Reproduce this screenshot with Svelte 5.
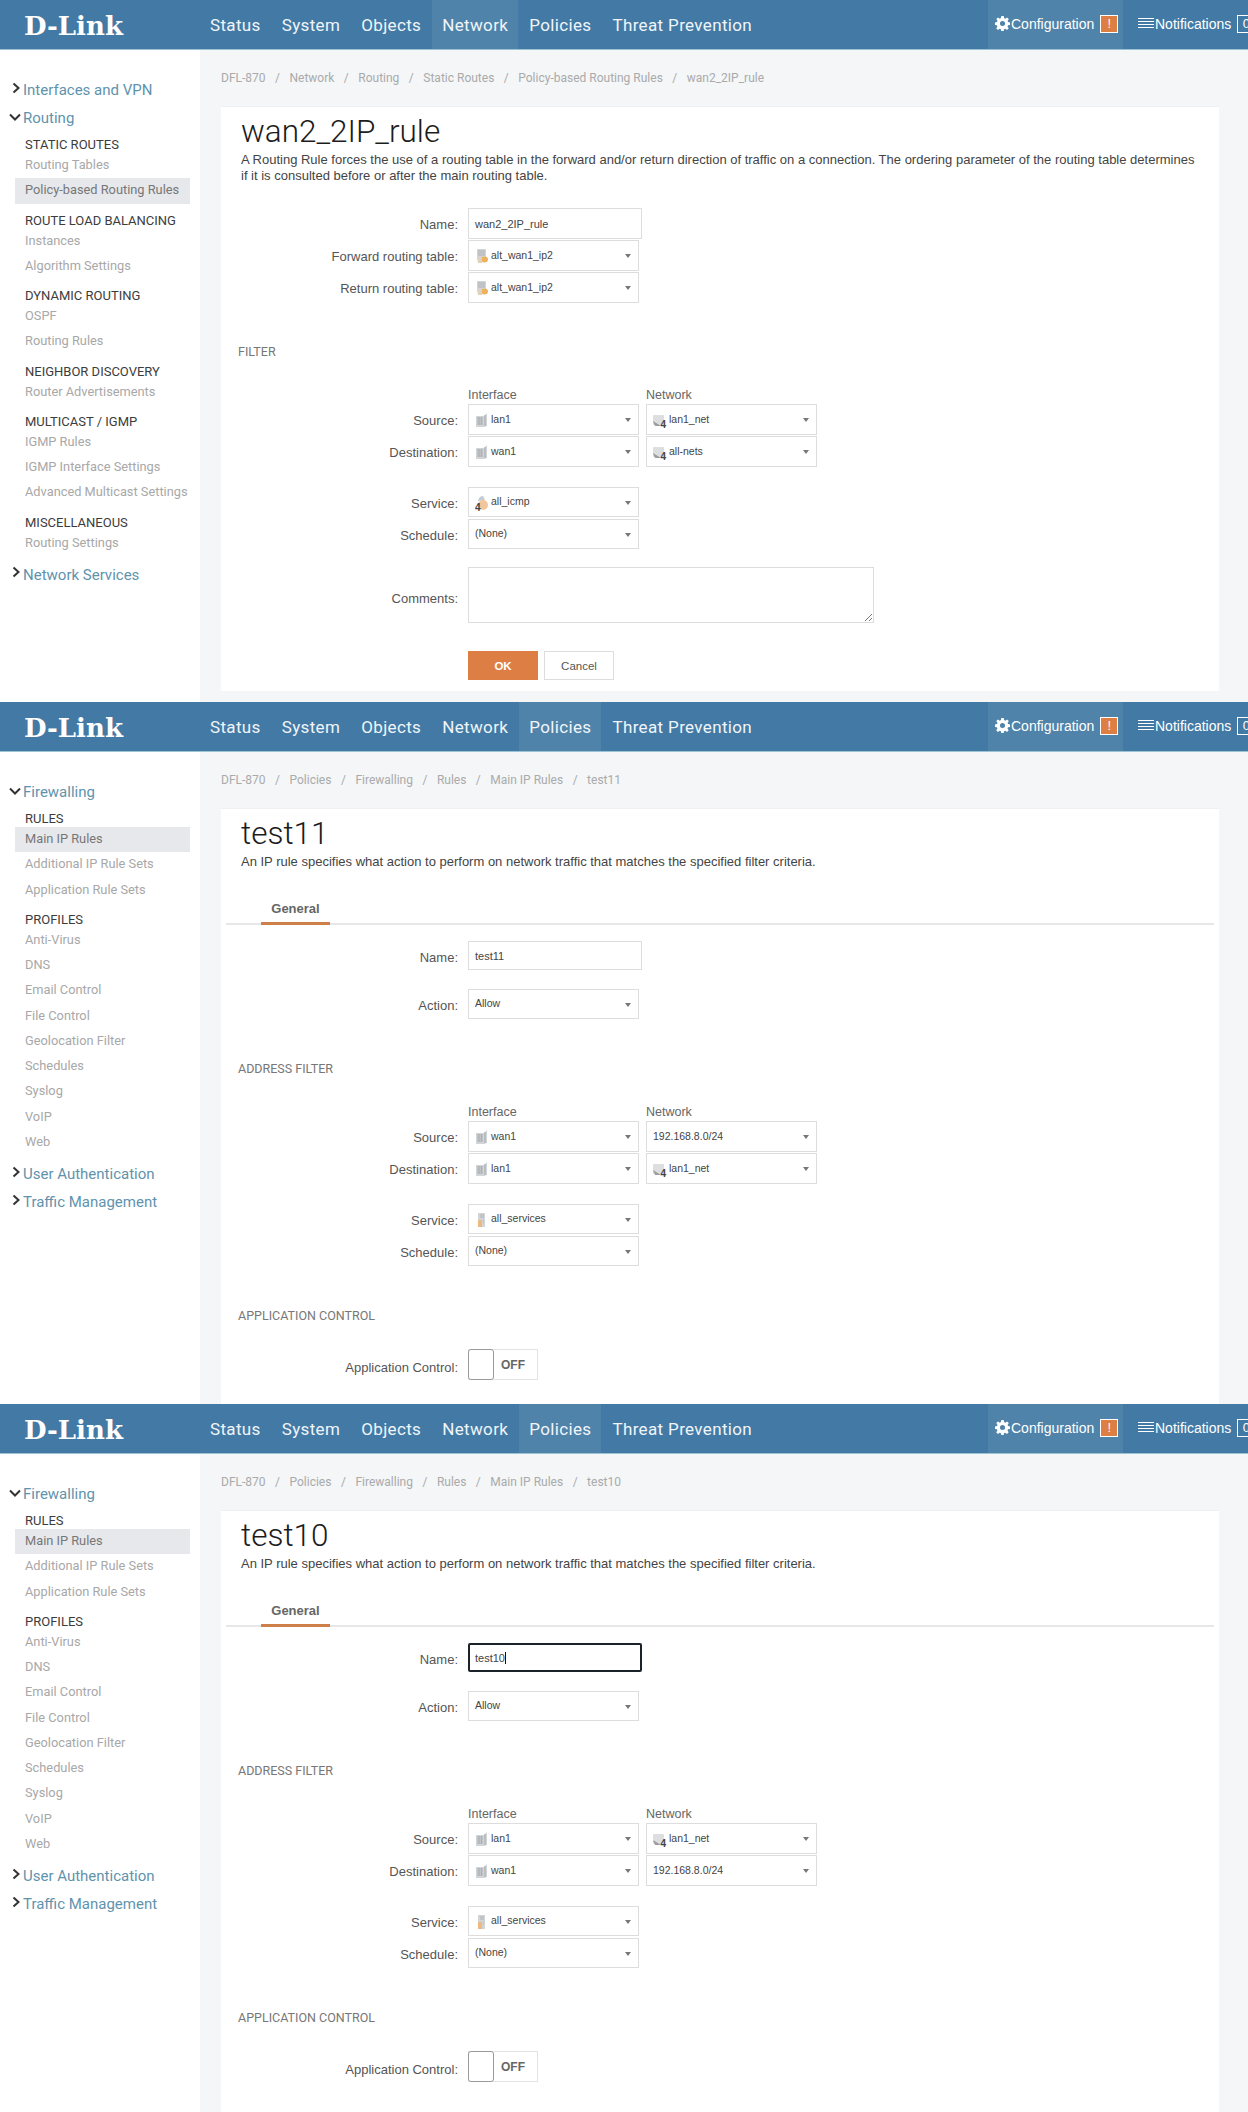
<script>
  const topNav = ["Status", "System", "Objects", "Network", "Policies", "Threat Prevention"];

  const firewallTree = [
    {
      label: "Firewalling",
      open: true,
      groups: [
        { title: "RULES", items: ["Main IP Rules", "Additional IP Rule Sets", "Application Rule Sets"] },
        {
          title: "PROFILES",
          items: ["Anti-Virus", "DNS", "Email Control", "File Control", "Geolocation Filter", "Schedules", "Syslog", "VoIP", "Web"],
        },
      ],
    },
    { label: "User Authentication" },
    { label: "Traffic Management" },
  ];

  const routingTree = [
    { label: "Interfaces and VPN" },
    {
      label: "Routing",
      open: true,
      groups: [
        { title: "STATIC ROUTES", items: ["Routing Tables", "Policy-based Routing Rules"] },
        { title: "ROUTE LOAD BALANCING", items: ["Instances", "Algorithm Settings"] },
        { title: "DYNAMIC ROUTING", items: ["OSPF", "Routing Rules"] },
        { title: "NEIGHBOR DISCOVERY", items: ["Router Advertisements"] },
        { title: "MULTICAST / IGMP", items: ["IGMP Rules", "IGMP Interface Settings", "Advanced Multicast Settings"] },
        { title: "MISCELLANEOUS", items: ["Routing Settings"] },
      ],
    },
    { label: "Network Services" },
  ];

  const ipRuleText = "An IP rule specifies what action to perform on network traffic that matches the specified filter criteria.";
  const firewallCrumbs = ["DFL-870", "Policies", "Firewalling", "Rules", "Main IP Rules"];

  const screens = [
    {
      id: "route",
      nav: "Network",
      tree: routingTree,
      current: "Policy-based Routing Rules",
      crumbs: ["DFL-870", "Network", "Routing", "Static Routes", "Policy-based Routing Rules", "wan2_2IP_rule"],
      title: "wan2_2IP_rule",
      text: "A Routing Rule forces the use of a routing table in the forward and/or return direction of traffic on a connection. The ordering parameter of the routing table determines if it is consulted before or after the main routing table.",
    },
    {
      id: "rule",
      nav: "Policies",
      tree: firewallTree,
      current: "Main IP Rules",
      crumbs: [...firewallCrumbs, "test11"],
      title: "test11",
      text: ipRuleText,
      source: ["iface", "wan1", "", "192.168.8.0/24"],
      dest: ["iface", "lan1", "net", "lan1_net"],
    },
    {
      id: "rule",
      nav: "Policies",
      tree: firewallTree,
      current: "Main IP Rules",
      crumbs: [...firewallCrumbs, "test10"],
      title: "test10",
      text: ipRuleText,
      focused: true,
      source: ["iface", "lan1", "net", "lan1_net"],
      dest: ["iface", "wan1", "", "192.168.8.0/24"],
      last: true,
    },
  ];
</script>

{#snippet icon(kind)}
  <svg class="obj" width="14" height="16" viewBox="0 0 14 16">
    {#if kind === "iface"}
      <path d="M1 4h8l3-3v13l-3 1H1z" fill="#d2d5d7" />
      <path d="M2 6h6M2 8h6M2 10h6M2 12h6M4 5v8M6.500 5v8" stroke="#a3a7ab" stroke-width=".7" />
      <path d="M10 3v11" stroke="#a3a7ab" />
    {:else if kind === "net"}
      <rect x="0" y="3" width="11" height="10" rx="1" fill="#dcdee0" />
      <path d="M0 9l8 5H2z" fill="#9a9ea2" />
      <text x="7.500" y="15.500" class="four">4</text>
    {:else if kind === "route"}
      <path d="M2 1h9v9H2z" fill="#d2d5d7" />
      <path d="M3 3h7M3 5h7M3 7h7" stroke="#a3a7ab" stroke-width=".8" />
      <ellipse cx="9.500" cy="11.500" rx="3.500" ry="3" fill="#eeb15e" />
      <path d="M2 10h5v5H3z" fill="#dfd3bd" />
    {:else if kind === "icmp"}
      <path d="M3 6q1-5 5-5l2 4z" fill="#c3ccd4" />
      <ellipse cx="8" cy="10" rx="5" ry="5" fill="#f3c59b" />
      <text x="0" y="15.500" class="four">4</text>
    {:else if kind === "svc"}
      <path d="M3 1h7v14H3z" fill="#d2d5d7" />
      <path d="M3 8h4v7H3z" fill="#eeb97f" />
      <path d="M5 3h4M5 5h4M8 8h1M8 10h1" stroke="#a3a7ab" stroke-width=".7" />
    {/if}
  </svg>
{/snippet}

{#snippet select(kind, value, extra = "")}
  <div class="select {extra}">
    {#if kind}{@render icon(kind)}{/if}
    <span class="value">{value}</span>
  </div>
{/snippet}

{#snippet address(screen)}
  <div class="row heads">
    <span class="label"></span>
    <span class="col">Interface</span>
    <span class="col net-col">Network</span>
  </div>
  <div class="row tight">
    <span class="label">Source:</span>
    {@render select(screen.source?.[0] ?? "iface", screen.source?.[1] ?? "lan1")}
    {@render select(screen.source?.[2] ?? "net", screen.source?.[3] ?? "lan1_net", "net-col")}
  </div>
  <div class="row tight">
    <span class="label">Destination:</span>
    {@render select(screen.dest?.[0] ?? "iface", screen.dest?.[1] ?? "wan1")}
    {@render select(screen.dest?.[2] ?? "net", screen.dest?.[3] ?? "all-nets", "net-col")}
  </div>
{/snippet}

{#snippet chevron(open)}
  <svg class="chev" width="14" height="14" viewBox="0 0 14 14">
    {#if open}
      <path d="M2 4.500l5 5 5-5" fill="none" stroke="#333" stroke-width="2" />
    {:else}
      <path d="M5.500 1.500l5 4.500-5 4.500" fill="none" stroke="#333" stroke-width="2" />
    {/if}
  </svg>
{/snippet}

{#each screens as screen}
  <section class="screen" class:last={screen.last}>
    <header class="topbar">
      <div class="logo">D-Link</div>
      <nav class="mainnav">
        {#each topNav as item}
          <span class="navitem" class:active={item === screen.nav}>{item}</span>
        {/each}
      </nav>
      <div class="tools">
        <div class="tool config">
          <svg width="15" height="15" viewBox="0 0 16 16">
            <path
              d="M8 5.300a2.700 2.700 0 1 0 0 5.400 2.700 2.700 0 0 0 0-5.400zM6.700 0h2.600l.4 2.200 1.300.6L12.900 1.500l1.800 1.800-1.300 1.900.6 1.300 2 .4v2.600l-2.100.4-.6 1.400 1.300 1.800-1.800 1.800-1.900-1.300-1.300.6-.4 2.100H6.700l-.4-2.100-1.300-.6-1.900 1.300-1.800-1.800 1.300-1.900-.6-1.300-2-.4V6.900l2.100-.4.6-1.300-1.300-1.900 1.800-1.800L5 2.800l1.300-.6z"
              fill="#fff"
              fill-rule="evenodd"
            />
          </svg>
          <span class="tool-text">Configuration</span>
          <span class="badge warn">!</span>
        </div>
        <div class="tool">
          <svg width="16" height="13" viewBox="0 0 16 13">
            <path d="M0 1.500h16M0 4.500h16M0 7.500h16M0 10.500h16" stroke="#fff" />
          </svg>
          <span class="tool-text">Notifications</span>
          <span class="badge">0</span>
        </div>
      </div>
    </header>

    <div class="body">
      <aside class="sidebar">
        {#each screen.tree as node}
          <div class="node" class:has-children={node.open}>
            <div class="node-title">
              {@render chevron(node.open)}
              <span>{node.label}</span>
            </div>
            {#if node.open}
              {#each node.groups as group}
                <h4>{group.title}</h4>
                {#each group.items as item}
                  <div class="leaf" class:current={item === screen.current}>{item}</div>
                {/each}
              {/each}
            {/if}
          </div>
        {/each}
      </aside>

      <main class="content" class:cut={screen.id === "rule"}>
        <div class="crumbs">
          {#each screen.crumbs as crumb, i}
            {#if i > 0}<span class="sep">/</span>{/if}
            <span>{crumb}</span>
          {/each}
        </div>

        <div class="card">
          <h1>{screen.title}</h1>
          <p class="intro">{screen.text}</p>

          {#if screen.id === "route"}
            <div class="form first">
              <div class="row tight">
                <span class="label">Name:</span>
                <div class="input tall">wan2_2IP_rule</div>
              </div>
              <div class="row tight">
                <span class="label">Forward routing table:</span>
                {@render select("route", "alt_wan1_ip2")}
              </div>
              <div class="row tight">
                <span class="label">Return routing table:</span>
                {@render select("route", "alt_wan1_ip2")}
              </div>
            </div>

            <h3 class="section filter">FILTER</h3>
            {@render address(screen)}
            <div class="row service">
              <span class="label">Service:</span>
              {@render select("icmp", "all_icmp", "short")}
            </div>
            <div class="row tight">
              <span class="label">Schedule:</span>
              {@render select("", "(None)", "short")}
            </div>
            <div class="row comments">
              <span class="label">Comments:</span>
              <div class="textarea">
                <svg class="grip" width="9" height="9" viewBox="0 0 9 9">
                  <path d="M1 8l7-7M5 8l3-3" stroke="#777" />
                </svg>
              </div>
            </div>
            <div class="row actions">
              <span class="label"></span>
              <button class="btn primary">OK</button>
              <button class="btn">Cancel</button>
            </div>
          {:else}
            <div class="tabs"><span class="tab">General</span></div>

            <div class="row name-row">
              <span class="label">Name:</span>
              <div class="input" class:focused={screen.focused}>
                {#if screen.focused}test1<span class="caret">0</span>{:else}{screen.title}{/if}
              </div>
            </div>
            <div class="row action-row">
              <span class="label">Action:</span>
              {@render select("", "Allow", "short")}
            </div>

            <h3 class="section">ADDRESS FILTER</h3>
            {@render address(screen)}
            <div class="row service">
              <span class="label">Service:</span>
              {@render select("svc", "all_services", "short")}
            </div>
            <div class="row tight">
              <span class="label">Schedule:</span>
              {@render select("", "(None)", "short")}
            </div>

            <h3 class="section">APPLICATION CONTROL</h3>
            <div class="row toggle-row">
              <span class="label">Application Control:</span>
              <div class="toggle"><span class="knob"></span><span class="off">OFF</span></div>
            </div>
          {/if}
        </div>
      </main>
    </div>
  </section>
{/each}

<style>
  :global(body) {
    background: #fff;
  }

  * {
    box-sizing: border-box;
  }

  .screen {
    height: 702px;
    display: flex;
    flex-direction: column;
    overflow: hidden;
    font-family: "Liberation Sans", Arial, sans-serif;
    color: #555;
  }

  .screen.last {
    height: 708px;
  }

  .topbar {
    flex: none;
    height: 50px;
    display: flex;
    background: #437aa5;
    border-bottom: 1px solid #9cc3d4;
    color: #fff;
  }

  .logo {
    width: 200px;
    padding: 9px 0 0 24px;
    font-family: "DejaVu Serif", "Liberation Serif", serif;
    font-weight: 700;
    font-size: 26px;
    line-height: 34px;
  }

  .mainnav {
    display: flex;
    flex: 1;
  }

  .navitem {
    padding: 0 10px;
    margin-right: 1px;
    font-family: Roboto, sans-serif;
    font-size: 17px;
    letter-spacing: 0.35px;
    line-height: 50px;
    color: #f0f5f9;
  }

  .navitem.active {
    background: #5083a9;
  }

  .tools {
    display: flex;
    width: 260px;
    overflow: hidden;
  }

  .tool {
    display: flex;
    align-items: center;
    gap: 1px;
    flex: none;
    padding: 0 0 2px 7px;
    font-size: 14px;
  }

  .tool.config {
    width: 135px;
    background: #5083a9;
    margin-right: 8px;
  }

  .tool-text {
    margin-right: 5px;
  }

  .badge {
    width: 18px;
    height: 18px;
    flex: none;
    border: 1px solid #fff;
    text-align: center;
    line-height: 16px;
    font-size: 13px;
  }

  .badge.warn {
    background: #dd7e43;
  }

  .body {
    flex: 1;
    min-height: 0;
    display: flex;
  }

  .sidebar {
    width: 200px;
    flex: none;
    padding-top: 22px;
    background: #fff;
    font-family: Roboto, sans-serif;
  }

  .node {
    padding-top: 8px;
  }

  .node.has-children {
    padding-bottom: 1px;
  }

  .node-title {
    display: flex;
    align-items: center;
    gap: 1px;
    height: 20px;
    padding-left: 8px;
    font-size: 15px;
    color: #5f93ad;
  }

  .chev {
    margin-top: -3px;
  }

  h4 {
    margin: 9px 0 0;
    padding-left: 25px;
    height: 16px;
    font-size: 13px;
    font-weight: 400;
    line-height: 16px;
    color: #3c3c3c;
  }

  .leaf {
    height: 25.25px;
    margin: 0 10px 0 15px;
    padding-left: 10px;
    font-size: 12.8px;
    line-height: 24.5px;
    color: #a8a8a8;
    white-space: nowrap;
  }

  .leaf.current {
    background: #e6e8eb;
    color: #777;
  }

  .content {
    flex: 1;
    min-width: 0;
    display: flex;
    flex-direction: column;
    padding: 0 29px 11px 21px;
    background: #f4f6f8;
  }

  .content.cut {
    padding-bottom: 0;
  }

  .crumbs {
    flex: none;
    height: 56px;
    display: flex;
    align-items: center;
    gap: 9.5px;
    font-family: Roboto, sans-serif;
    font-size: 12px;
    color: #aaa;
  }

  .card {
    flex: 1;
    background: #fff;
    border-top: 1px solid #eef0f2;
  }

  h1 {
    margin: 7px 0 0 20px;
    font-family: Roboto, sans-serif;
    font-size: 31.5px;
    font-weight: 300;
    line-height: 36px;
    color: #1c1c1c;
  }

  .intro {
    margin: 2px 20px 0 20px;
    font-size: 13px;
    line-height: 16px;
    color: #444;
  }

  .form.first {
    margin-top: 24px;
  }

  .row {
    display: flex;
    align-items: flex-start;
  }

  .row.tight {
    margin-bottom: 1px;
  }

  .label {
    flex: none;
    width: 237px;
    margin-right: 10px;
    padding-top: 9px;
    font-size: 13px;
    line-height: 16px;
    text-align: right;
    color: #555;
  }

  .heads {
    height: 16px;
    margin-bottom: 1px;
    margin-top: 28px;
    font-size: 12.5px;
    line-height: 16px;
    color: #666;
  }

  .heads .label {
    padding: 0;
  }

  .col {
    width: 171px;
  }

  .net-col {
    margin-left: 7px;
  }

  .section {
    margin: 43px 0 0 17px;
    height: 14px;
    font-family: Roboto, sans-serif;
    font-size: 12.5px;
    font-weight: 400;
    line-height: 14px;
    color: #777;
  }

  .section.filter {
    margin-top: 42px;
  }

  .select {
    position: relative;
    flex: none;
    width: 171px;
    height: 31px;
    display: flex;
    align-items: center;
    padding: 0 20px 2px 6px;
    background: #fff;
    border: 1px solid #ddd;
    font-size: 10.5px;
    color: #444;
  }

  .select.short {
    height: 30px;
  }

  .select::after {
    content: "";
    position: absolute;
    right: 7px;
    top: 13px;
    border: 3.5px solid transparent;
    border-top: 4px solid #777;
    border-bottom: 0;
  }

  .obj {
    flex: none;
    margin: 3px 2px 0 0;
  }

  .four {
    font-family: "Liberation Sans", sans-serif;
    font-size: 10px;
    font-weight: 700;
    fill: #444;
  }

  .input {
    width: 174px;
    height: 29px;
    padding: 0 6px;
    display: flex;
    align-items: center;
    background: #fff;
    border: 1px solid #ddd;
    font-size: 11px;
    color: #444;
  }

  .input.tall {
    height: 31px;
  }

  .input.focused {
    border: 2px solid #1c2229;
    border-radius: 2px;
    padding-left: 5px;
  }

  .caret {
    border-right: 1px solid #111;
  }

  .service {
    margin-top: 20px;
    margin-bottom: 2px;
  }

  .comments {
    margin-top: 18px;
  }

  .comments .label {
    padding-top: 24px;
  }

  .textarea {
    position: relative;
    width: 406px;
    height: 56px;
    border: 1px solid #ddd;
  }

  .grip {
    position: absolute;
    right: 0;
    bottom: 0;
  }

  .actions {
    margin-top: 28px;
  }

  .btn {
    width: 70px;
    height: 29px;
    margin-right: 6px;
    padding: 0;
    background: #fff;
    border: 1px solid #ddd;
    font-family: "Liberation Sans", sans-serif;
    font-size: 11.5px;
    color: #555;
  }

  .btn.primary {
    background: #dd7f45;
    border-color: #dd7f45;
    color: #fff;
    font-weight: 700;
  }

  .tabs {
    height: 30px;
    margin: 25px 5px 0;
    padding-left: 35px;
    border-bottom: 2px solid #e6e7e8;
  }

  .tab {
    display: block;
    width: 69px;
    height: 30px;
    padding-top: 4px;
    border-bottom: 3px solid #cf7f4a;
    font-size: 13px;
    font-weight: 700;
    line-height: 20px;
    text-align: center;
    color: #666;
  }

  .name-row {
    margin-top: 16px;
  }

  .action-row {
    margin-top: 19px;
  }

  .toggle-row {
    margin-top: 26px;
  }

  .toggle {
    display: flex;
    align-items: center;
    width: 70px;
    height: 31px;
    border: 1px solid #e3e3e3;
  }

  .knob {
    width: 26px;
    height: 31px;
    margin: 0 7px 0 -1px;
    border: 1px solid #9a9a9a;
    border-radius: 3px;
    background: #fff;
  }

  .off {
    font-size: 12px;
    font-weight: 700;
    color: #666;
  }

  .toggle-row .label {
    padding-top: 11px;
  }
</style>
